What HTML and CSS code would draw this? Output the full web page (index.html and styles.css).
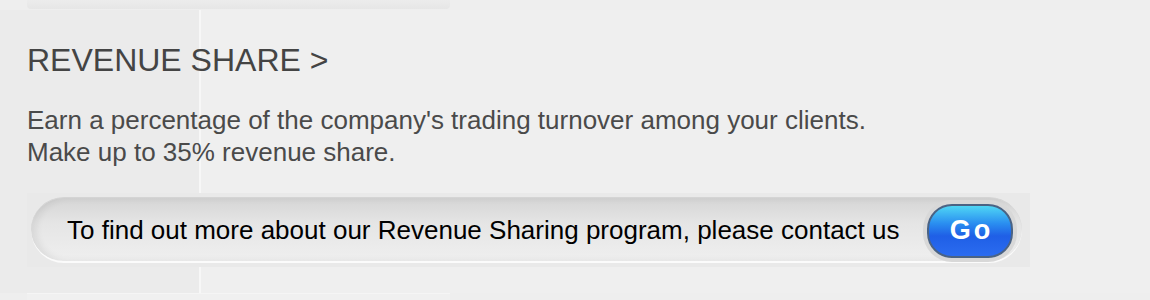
FILE: index.html
```html
<!doctype html>
<html>
<head>
	<meta charset="utf-8">
	<title>Revenue share</title>
	<link rel="stylesheet" href="styles.css">
</head>

<body>
	<div class="top-bar"></div>
	<div class="section">
		<h2 class="title">REVENUE SHARE &gt;</h2>
		<p class="intro">
			Earn a percentage of the company's trading turnover among your clients.<br>
			Make up to 35% revenue share.
		</p>
		<div class="contact">
			<div class="pill">
				<span class="pill-text">To find out more about our Revenue Sharing program, please contact us</span>
				<a class="go" href="#">Go</a>
			</div>
		</div>
	</div>
	<div class="bottom-box"></div>
</body>
</html>
```

FILE: styles.css
```css
		html{
			background-color: #eeeeee;
		}
		body,html{
			padding: 0;
			margin: 0;
			font-family: "Liberation Sans", Arial, sans-serif;
		}
		.top-bar{
			margin-left: 27px;
			width: 423px;
			height: 9px;
			background: linear-gradient(to bottom, #ececec, #e6e6e6);
			border-radius: 0 0 4px 4px;
		}
		.section{
			margin-top: 1px;
			padding: 32px 0 0 27px;
			height: 251px;
			box-sizing: content-box;
			background: linear-gradient(to right, #ebebeb 199px, #f7f7f7 199px, #f7f7f7 201px, #efefef 201px);
		}
		.title{
			margin: 0;
			font-size: 32px;
			font-weight: normal;
			color: #444;
			line-height: 36px;
		}
		.intro{
			margin: 26px 0 0;
			font-size: 26px;
			line-height: 32px;
			color: #4a4a4a;
		}
		.contact{
			margin-top: 25px;
			width: 991px;
			padding: 4px 8px 4px 4px;
			background: #e9e9e9;
		}
		.pill{
			display: flex;
			align-items: center;
			justify-content: space-between;
			height: 66px;
			padding: 2px 9px 0 36px;
			border-radius: 33px;
			border-top: 1px solid #d4d4d4;
			border-bottom: 2px solid #fbfbfb;
			box-sizing: border-box;
			background: linear-gradient(to bottom, #d5d5d5, #e5e5e5 40%, #efefef);
			box-shadow: inset 5px 0 7px rgba(0,0,0,0.07);
		}
		.pill-text{
			font-size: 26px;
			color: #000;
		}
		.go{
			display: flex;
			align-items: center;
			justify-content: center;
			width: 82px;
			height: 50px;
			border-radius: 25px;
			border: 2px solid #4b6384;
			background: linear-gradient(to bottom, #4fd6f5, #2a8ef0 35%, #1f5fe6 60%, #2b6cf0);
			color: #fff;
			font-size: 27px;
			font-weight: bold;
			letter-spacing: 3px;
			text-indent: 3px;
			text-decoration: none;
			box-shadow: 0 0 0 4px #d8d8d8;
		}
		.bottom-box{
			margin-left: 27px;
			width: 423px;
			height: 7px;
			background: #f0f0f0;
			border-top: 1px solid #f5f5f5;
		}
```
